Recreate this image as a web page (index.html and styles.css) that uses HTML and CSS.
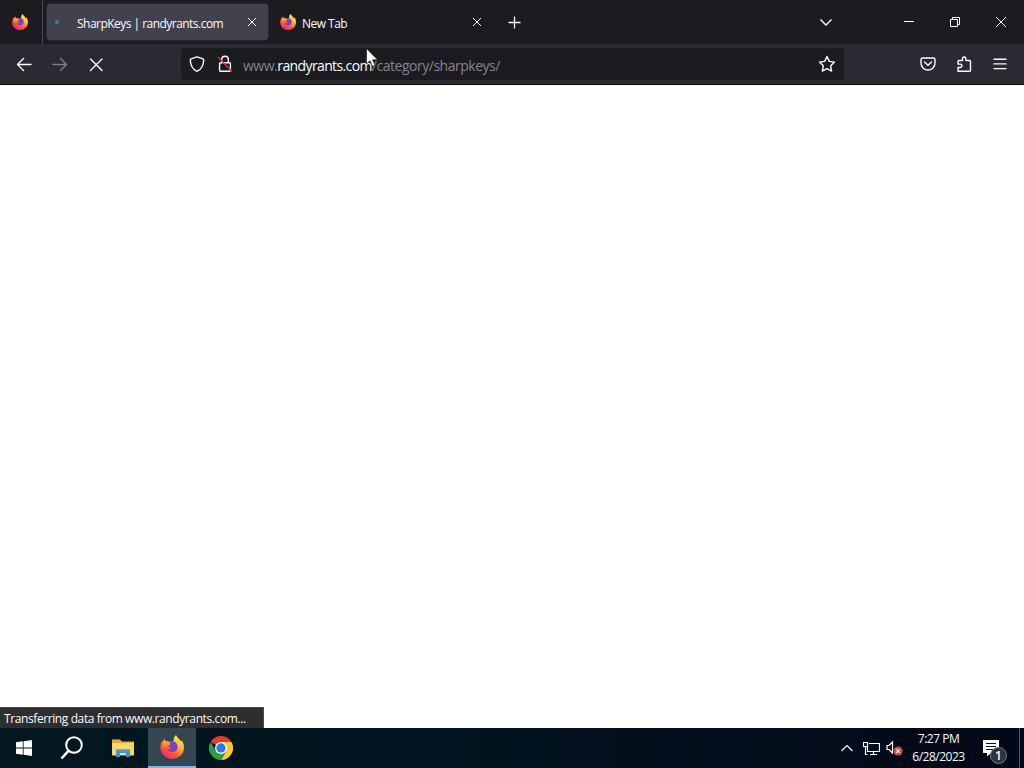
FILE: index.html
```
<!DOCTYPE html>
<html lang="en">
<head>
  <meta charset="UTF-8">
  <meta name="viewport" content="width=device-width, initial-scale=1">
  <title>SharpKeys | randyrants.com</title>
  <link rel="stylesheet" href="styles.css">
</head>
<body>

<!-- Shared logo -->
<svg class="defs" width="0" height="0">
  <defs>
    <linearGradient id="fx-body" x1="0.85" y1="0.1" x2="0.25" y2="1">
      <stop offset="0" stop-color="#fff04a"/>
      <stop offset="0.35" stop-color="#ffb02e"/>
      <stop offset="0.65" stop-color="#ff5a35"/>
      <stop offset="1" stop-color="#e8207d"/>
    </linearGradient>
    <symbol id="firefox" viewBox="0 0 24 24">
      <path fill="url(#fx-body)" d="M16 0c1 2.500 3.600 3.800 4.800 6.500.600-.200.700-.900.600-1.500C23.300 7.600 24 10 24 12.800 23.800 19.300 18.500 24 12.200 24 5.500 24 .300 19 .300 12.600c0-2.800.800-5.200 2.400-7.200l.300 1.700L4.700 3.600l.800 2.900c1.300-.400 2.600-.200 3.900.200C10.800 6 12 5.700 13.600 6 13.400 3.500 14.200 1.500 16 0z"/>
      <path fill="#ff9a2e" d="M3 7l1.700-3.400.800 2.900c1.500-.400 3 .100 4.100.900L7 10.500l-3.500 2z"/>
      <path fill="#7542c8" d="M9.200 6.700c3.400-1.500 8 .300 8.400 4.800.300 3.700-2.700 5.600-5.400 5.500-2.600 0-4.500-1.400-4.900-3.400 1.600.900 3.200.300 4.400-.800-1.500-.300-3.300-.500-3.300-1.600 0-.900 1.500-1.200 2.300-2-.300-.900-.700-1.600-1.500-2.500z"/>
    </symbol>
  </defs>
</svg>

<div class="browser">

  <!-- Tab strip -->
  <div class="tab-strip">
    <div class="view-btn"><svg width="16" height="16"><use href="#firefox"/></svg></div>
    <div class="tab active">
      <span class="loading"></span>
      <span class="tab-title">SharpKeys | randyrants.com</span>
      <svg class="tab-close" width="10" height="10" viewBox="0 0 10 10"><path d="M1 1l8 8M9 1l-8 8"/></svg>
    </div>
    <div class="tab">
      <svg class="favicon" width="16" height="16"><use href="#firefox"/></svg>
      <span class="tab-title">New Tab</span>
      <svg class="tab-close" width="10" height="10" viewBox="0 0 10 10"><path d="M1 1l8 8M9 1l-8 8"/></svg>
    </div>
    <svg class="new-tab" width="13" height="13" viewBox="0 0 13 13"><path d="M6.500 .500v12M.500 6.500h12"/></svg>
    <div class="all-tabs"><svg width="14" height="14" viewBox="0 0 14 14"><path d="M1.500 4.500L7 10l5.500-5.500"/></svg></div>
    <div class="window-btn"><svg width="12" height="12" viewBox="0 0 12 12"><path d="M1 5.500h10"/></svg></div>
    <div class="window-btn"><svg width="12" height="12" viewBox="0 0 12 12"><path d="M1.500 3.500h7v7h-7zM3.500 3.500v-2h7v7h-2"/></svg></div>
    <div class="window-btn"><svg width="12" height="12" viewBox="0 0 12 12"><path d="M1 1l10 10M11 1L1 11"/></svg></div>
  </div>

  <!-- Navigation toolbar -->
  <div class="toolbar">
    <div class="tool"><svg width="16" height="16" viewBox="0 0 16 16"><path d="M15 8.500H1.500M7.500 2.500l-6 6 6 6"/></svg></div>
    <div class="tool disabled"><svg width="16" height="16" viewBox="0 0 16 16"><path d="M1 8.500h13.500M8.500 2.500l6 6-6 6"/></svg></div>
    <div class="tool"><svg width="16" height="16" viewBox="0 0 16 16"><path d="M2.500 3l11.500 11.500M14 3L2.500 14.500"/></svg></div>
    <div class="url-bar">
      <svg class="shield" width="16" height="16" viewBox="0 0 16 16"><path d="M8 .800l6 2.100c.500.200.700.500.700 1C14.500 9.500 12 13.500 8 15.300 4 13.500 1.500 9.500 1.300 3.900c0-.500.200-.800.700-1z"/></svg>
      <svg class="lock" width="16" height="18" viewBox="0 0 16 18"><path d="M4.700 7.700V4.500a3.300 3.300 0 0 1 6.600 0v3.200M3.600 7.700h8.800a1 1 0 0 1 1 1v6.600a1 1 0 0 1-1 1H3.600a1 1 0 0 1-1-1V8.700a1 1 0 0 1 1-1z"/><path class="slash" d="M1.500 2.500l13 13.500"/></svg>
      <span class="url">www.<b>randyrants.com</b>/category/sharpkeys/</span>
      <svg class="star" width="18" height="18" viewBox="0 0 18 18"><path d="M9 1.500l2.300 4.900 5.200.700-3.800 3.700.900 5.300L9 13.600l-4.600 2.500.900-5.300L1.500 7.100l5.200-.700z"/></svg>
    </div>
    <div class="tool pocket"><svg width="16" height="16" viewBox="0 0 16 16"><path d="M2.500 2h11a1.500 1.500 0 0 1 1.500 1.500V7a7 7 0 0 1-14 0V3.500A1.500 1.500 0 0 1 2.500 2zM4.500 6L8 9.300 11.500 6"/></svg></div>
    <div class="tool"><svg width="16" height="16" viewBox="0 0 16 16"><path d="M2 15.200V11.500H4.200a1.700 1.700 0 0 0 0-3.400H2V5.500a1 1 0 0 1 1-1H6.500V2.700a1.700 1.700 0 0 1 3.400 0v1.800h3.600a1 1 0 0 1 1 1v8.700a1 1 0 0 1-1 1z"/></svg></div>
    <div class="tool"><svg width="16" height="16" viewBox="0 0 16 16"><path d="M2 3.200h12M2 7.900h12M2 12.600h12"/></svg></div>
  </div>

  <!-- Page area, still blank while loading -->
  <div class="page">
    <div class="status">Transferring data from www.randyrants.com...</div>
  </div>
</div>

<!-- Taskbar -->
<div class="taskbar">
  <div class="task"><svg width="16" height="16" viewBox="0 0 16 16"><path fill="#fff" d="M0 2.200L6.800 1.300v6.300H0zM7.600 1.200L16 0v7.600H7.600zM0 8.400h6.800v6.300L0 13.800zM7.600 8.400H16V16l-8.400-1.200z"/></svg></div>
  <div class="task"><svg width="24" height="24" viewBox="0 0 24 24"><circle cx="14" cy="9" r="7.800" fill="none" stroke="#fff" stroke-width="2"/><path d="M8.500 14.800L1.500 22.500" stroke="#fff" stroke-width="2.500"/></svg></div>
  <div class="task explorer">
    <svg width="22" height="20" viewBox="0 0 22 20">
      <path fill="#e5a937" d="M0 1.500h8l2 2h12v13H0z"/>
      <path fill="#fbd668" d="M0 5h22v12.500H0z"/>
      <path fill="#3c91cf" d="M4 19v-7.500h14V19h-4v-4H8v4z"/>
      <path fill="#4a9fd6" d="M4 11.500h14v2H4z"/>
    </svg>
  </div>
  <div class="task running"><svg width="24" height="24"><use href="#firefox"/></svg></div>
  <div class="task">
    <svg width="24" height="24" viewBox="0 0 24 24">
      <path fill="#e33b2e" d="M12 12L1.600 6A12 12 0 0 1 22.400 6z"/>
      <path fill="#fcc934" d="M17.200 15L12 24A12 12 0 0 0 22.400 6H12z"/>
      <path fill="#2b9e4b" d="M6.800 15L1.600 6A12 12 0 0 0 12 24l5.200-9z"/>
      <circle cx="12" cy="12" r="6" fill="#fff"/>
      <circle cx="12" cy="12" r="4.700" fill="#2f78e0"/>
    </svg>
  </div>

  <div class="tray">
    <svg width="14" height="8" viewBox="0 0 14 8"><path d="M1.500 7L7 1.500 12.500 7"/></svg>
    <svg class="network" width="17" height="15" viewBox="0 0 17 15"><path d="M6 2.500h10.500v8H4.500V6M10.500 10.500v3M7 13.500h7M.500 1.500h4v4h-4zM2.500 5.500v8h2"/></svg>
    <svg class="volume" width="17" height="16" viewBox="0 0 17 16">
      <path d="M1 5.500h2L6.500 2v11L3 9.500H1z"/>
      <circle cx="12" cy="11" r="4.600" fill="#d04a48" stroke="none"/>
      <path d="M10.200 9.200l3.600 3.600M13.800 9.200l-3.600 3.600"/>
    </svg>
    <div class="clock">
      <span class="time">7:27 PM</span>
      <span class="date">6/28/2023</span>
    </div>
    <div class="action">
      <svg width="17" height="17" viewBox="0 0 17 17"><path class="note" d="M0 0h16v13H8l-4 3.500V13H0z"/><path class="lines" d="M3 3.500h10M3 6.500h10M3 9.500h7"/></svg>
      <span class="badge">1</span>
    </div>
    <div class="show-desktop"></div>
  </div>
</div>

<!-- Mouse pointer -->
<svg class="cursor" width="13" height="20" viewBox="0 0 13 20"><path d="M.500 .500v15.500l3.500-3.300 2.600 5.700 2.400-1.100-2.500-5.500h5z"/></svg>

</body>
</html>
```

FILE: styles.css
```
body {
  margin: 0;
  width: 1024px;
  height: 768px;
  overflow: hidden;
  display: flex;
  flex-direction: column;
  font-family: "Open Sans", "Noto Sans", sans-serif;
  font-size: 12px;
  color: #fbfbfe;
  background: #fff;
}

svg {
  flex: none;
  fill: none;
}

.defs {
  position: absolute;
}

.browser {
  flex: 1;
  display: flex;
  flex-direction: column;
}

/* Tab strip */
.tab-strip {
  height: 44px;
  display: flex;
  align-items: center;
  background: #1c1b20;
  stroke: #fbfbfe;
}

.tab-strip use {
  stroke: none;
}

.view-btn {
  box-sizing: border-box;
  width: 43px;
  height: 44px;
  padding: 14px 0 0 12px;
  border-right: 1px solid #4b4a54;
}

.tab {
  box-sizing: border-box;
  width: 221px;
  height: 36px;
  margin-left: 4px;
  padding: 0 11px 0 8px;
  display: flex;
  align-items: center;
  border-radius: 4px;
}

.tab.active {
  background: #42414d;
  box-shadow: 0 0 2px #4f4d5a;
}

.loading {
  width: 4px;
  height: 4px;
  margin: 0 18px 0 0;
  border-radius: 50%;
  background: #2f7fbd;
}

.favicon {
  margin-right: 6px;
}

.tab-title {
  flex: 1;
  padding-top: 2px;
  white-space: nowrap;
  letter-spacing: -0.53px;
}

.new-tab {
  margin-left: 15px;
  stroke-width: 1.300;
}

.all-tabs {
  flex: 1;
  display: flex;
  justify-content: flex-end;
  padding-right: 53px;
  stroke-width: 1.400;
}

.window-btn {
  width: 46px;
  display: flex;
  justify-content: center;
}

/* Toolbar */
.toolbar {
  box-sizing: border-box;
  height: 41px;
  padding: 0 6px;
  display: flex;
  align-items: center;
  background: #2b2a32;
  border-bottom: 1px solid #0c0b10;
  stroke: #fbfbfe;
  stroke-width: 1.400;
  stroke-linejoin: round;
  stroke-linecap: round;
}

.tool {
  width: 36px;
  display: flex;
  justify-content: center;
}

.tool.disabled {
  opacity: 0.4;
}

.tool.pocket {
  margin-left: auto;
}

.url-bar {
  box-sizing: border-box;
  width: 663px;
  height: 32px;
  margin-left: 67px;
  padding: 0 8px;
  display: flex;
  align-items: center;
  border-radius: 4px;
  background: #1c1b20;
}

.lock {
  margin: 0 10px 0 12px;
}

.slash {
  stroke: #e22850;
}

.url {
  flex: 1;
  padding-top: 2px;
  font-size: 14px;
  letter-spacing: -0.48px;
  color: #85848c;
}

.url b {
  font-weight: normal;
  letter-spacing: -0.62px;
  color: #fbfbfe;
}

/* Page */
.page {
  flex: 1;
  display: flex;
  align-items: flex-end;
  background: #fff;
}

.status {
  box-sizing: border-box;
  width: 264px;
  height: 21px;
  padding-left: 4px;
  border: 1px solid #4a4a4e;
  border-width: 1px 1px 0 0;
  background: #2e2e30;
  line-height: 22px;
  letter-spacing: -0.4px;
  white-space: nowrap;
}

/* Taskbar */
.taskbar {
  height: 40px;
  display: flex;
  background: linear-gradient(90deg, #021720, #02141f 45%, #020817);
}

.task {
  width: 48px;
  margin-right: 1px;
  display: flex;
  align-items: center;
  justify-content: center;
}

.task:first-child {
  margin-right: 0;
}

.task.explorer {
  margin-left: 2px;
}

.task.running {
  box-sizing: border-box;
  border-bottom: 2px solid #76b9ed;
  background: #34464f;
}

.tray {
  margin-left: auto;
  display: flex;
  align-items: center;
  stroke: #fff;
  stroke-width: 1.200;
}

.network {
  margin-left: 9px;
}

.volume {
  margin-left: 6px;
}

.clock {
  width: 71px;
  display: flex;
  flex-direction: column;
  align-items: center;
  line-height: 18px;
  letter-spacing: -0.5px;
}

.action {
  position: relative;
  width: 45px;
  height: 17px;
  padding-left: 9px;
  box-sizing: border-box;
}

.note {
  fill: #fff;
  stroke: none;
}

.lines {
  stroke: #07101d;
}

.badge {
  position: absolute;
  left: 16px;
  top: 7px;
  width: 15px;
  height: 15px;
  border: 1px solid #777d84;
  border-radius: 50%;
  background: #2d343d;
  font-size: 12px;
  font-weight: 600;
  line-height: 15px;
  text-align: center;
}

.show-desktop {
  width: 4px;
  height: 40px;
  border-left: 1px solid #4c5560;
}

/* Pointer lies over the toolbar */
.cursor {
  position: absolute;
  left: 366px;
  top: 48px;
  fill: #fff;
  stroke: #111;
  stroke-width: 0.600;
}
```
